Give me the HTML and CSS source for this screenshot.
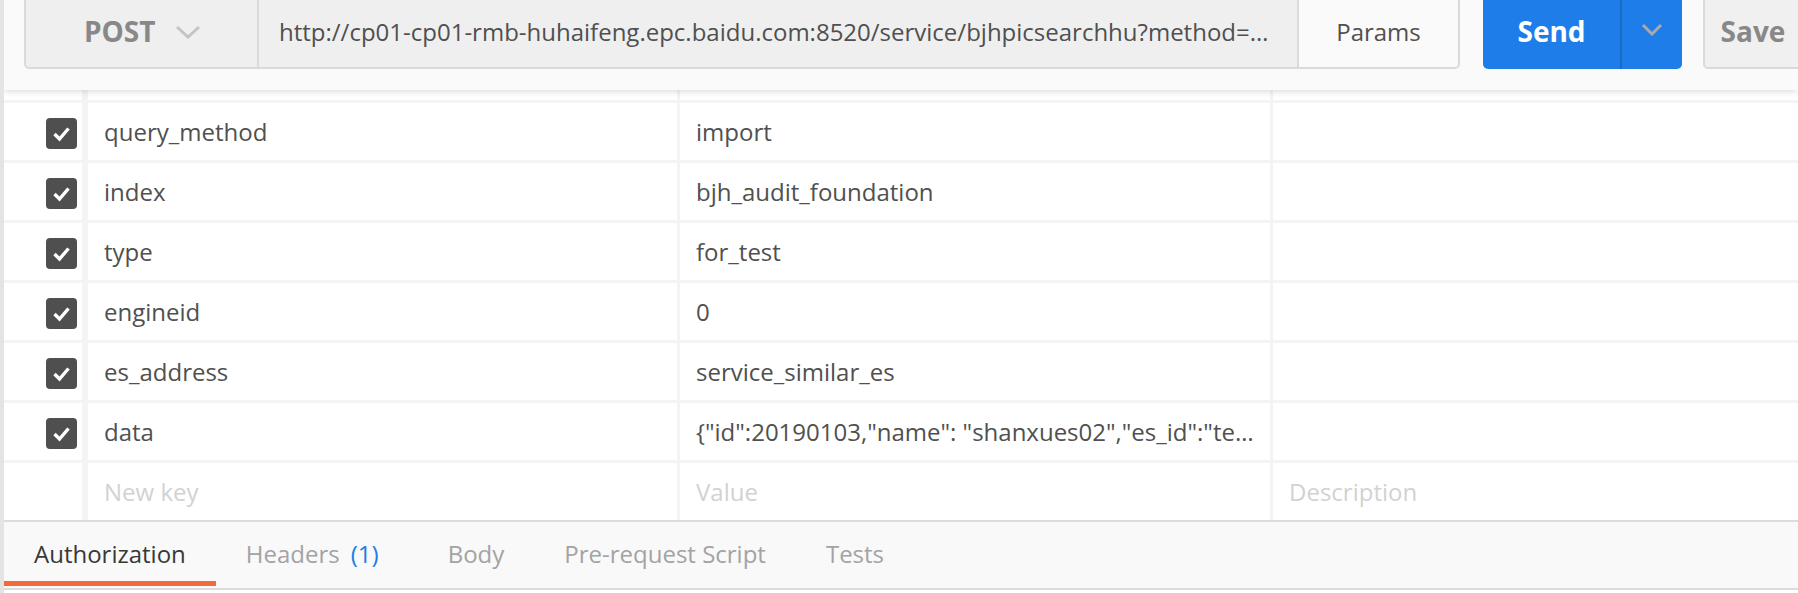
FILE: index.html
```html
<!DOCTYPE html>
<html lang="en">
<head>
<meta charset="utf-8">
<title>Postman request</title>
<link rel="stylesheet" href="styles.css">
</head>
<body>
<div class="app">
  <div class="edge-mark"></div>
  <header class="req-header">
    <div class="req-group">
      <div class="method">
        <span>POST</span>
        <svg class="chev" width="26" height="14" viewBox="0 0 26 14"><path d="M2 2 L13 12 L24 2" fill="none" stroke="#c4c4c4" stroke-width="3"/></svg>
      </div>
      <div class="url">http://cp01-cp01-rmb-huhaifeng.epc.baidu.com:8520/service/bjhpicsearchhu?method=…</div>
      <div class="params">Params</div>
    </div>
    <div class="send-group">
      <div class="send">Send</div>
      <div class="send-drop">
        <svg width="22" height="13" viewBox="0 0 22 13"><path d="M2 2 L11 11 L20 2" fill="none" stroke="#a9a9a9" stroke-width="3"/></svg>
      </div>
    </div>
    <div class="save">Save</div>
  </header>

  <div class="params-table">
    <div class="cell check"></div><div class="cell"></div><div class="cell"></div><div class="cell"></div>

    <div class="cell check"><span class="box"><svg width="31" height="31" viewBox="0 0 31 31"><path d="M8.5 16 L13.5 21 L22.5 10.5" fill="none" stroke="#fff" stroke-width="3.4"/></svg></span></div>
    <div class="cell">query_method</div><div class="cell">import</div><div class="cell"></div>

    <div class="cell check"><span class="box"><svg width="31" height="31" viewBox="0 0 31 31"><path d="M8.5 16 L13.5 21 L22.5 10.5" fill="none" stroke="#fff" stroke-width="3.4"/></svg></span></div>
    <div class="cell">index</div><div class="cell">bjh_audit_foundation</div><div class="cell"></div>

    <div class="cell check"><span class="box"><svg width="31" height="31" viewBox="0 0 31 31"><path d="M8.5 16 L13.5 21 L22.5 10.5" fill="none" stroke="#fff" stroke-width="3.4"/></svg></span></div>
    <div class="cell">type</div><div class="cell">for_test</div><div class="cell"></div>

    <div class="cell check"><span class="box"><svg width="31" height="31" viewBox="0 0 31 31"><path d="M8.5 16 L13.5 21 L22.5 10.5" fill="none" stroke="#fff" stroke-width="3.4"/></svg></span></div>
    <div class="cell">engineid</div><div class="cell">0</div><div class="cell"></div>

    <div class="cell check"><span class="box"><svg width="31" height="31" viewBox="0 0 31 31"><path d="M8.5 16 L13.5 21 L22.5 10.5" fill="none" stroke="#fff" stroke-width="3.4"/></svg></span></div>
    <div class="cell">es_address</div><div class="cell">service_similar_es</div><div class="cell"></div>

    <div class="cell check"><span class="box"><svg width="31" height="31" viewBox="0 0 31 31"><path d="M8.5 16 L13.5 21 L22.5 10.5" fill="none" stroke="#fff" stroke-width="3.4"/></svg></span></div>
    <div class="cell">data</div><div class="cell">{"id":20190103,"name": "shanxues02","es_id":"te…</div><div class="cell"></div>

    <div class="cell check"></div>
    <div class="cell placeholder">New key</div><div class="cell placeholder">Value</div><div class="cell placeholder">Description</div>
  </div>

  <nav class="tabs">
    <div class="tab active">Authorization</div>
    <div class="tab">Headers<span class="count">(1)</span></div>
    <div class="tab">Body</div>
    <div class="tab">Pre-request Script</div>
    <div class="tab">Tests</div>
  </nav>
</div>
</body>
</html>
```

FILE: styles.css
```css
* { box-sizing: border-box; }

html, body {
  margin: 0;
  padding: 0;
  overflow: hidden;
}

body {
  font-family: "Open Sans", "Liberation Sans", sans-serif;
  background: #ffffff;
}

.app {
  width: 1798px;
  height: 593px;
  border-left: 4px solid #e4e4e4;
  display: flex;
  flex-direction: column;
  position: relative;
  overflow: hidden;
}

.edge-mark {
  position: absolute;
  left: -4px;
  top: 20px;
  width: 3px;
  height: 6px;
  background: #f26b3a;
}

/* request bar */
.req-header {
  height: 90px;
  flex-shrink: 0;
  background: #fafafa;
  display: flex;
  align-items: flex-start;
  padding-left: 20px;
  position: relative;
  z-index: 1;
  box-shadow: 0 2px 6px rgba(0, 0, 0, 0.13);
}

.req-header > * { flex-shrink: 0; }

.req-group {
  display: flex;
  width: 1436px;
  height: 76px;
  margin-top: -7px;
  border: 2px solid #dadada;
  border-radius: 5px;
  overflow: hidden;
  background: #efefef;
}

.method {
  width: 233px;
  flex-shrink: 0;
  display: flex;
  align-items: center;
  padding-left: 58px;
  gap: 19px;
  border-right: 2px solid #dadada;
  font-size: 28px;
  font-weight: 700;
  color: #888888;
}

.chev { margin-top: 2px; }

.url {
  flex: 1;
  min-width: 0;
  display: flex;
  align-items: center;
  padding-left: 20px;
  padding-right: 10px;
  font-size: 24px;
  color: #505050;
  white-space: nowrap;
  overflow: hidden;
  border-right: 2px solid #dadada;
}

.params {
  width: 159px;
  flex-shrink: 0;
  display: flex;
  align-items: center;
  justify-content: center;
  background: #fafafa;
  font-size: 24px;
  color: #505050;
}

.send-group {
  display: flex;
  width: 199px;
  height: 76px;
  margin-top: -7px;
  margin-left: 23px;
  background: #1e7de8;
  border-radius: 0 0 5px 5px;
  overflow: hidden;
}

.send {
  width: 137px;
  display: flex;
  align-items: center;
  justify-content: center;
  color: #ffffff;
  font-size: 28px;
  font-weight: 700;
}

.send-drop {
  flex: 1;
  display: flex;
  align-items: center;
  justify-content: center;
  border-left: 2px solid #1a6bc6;
  padding-bottom: 4px;
}

.save {
  width: 100px;
  height: 76px;
  margin-top: -7px;
  margin-left: 21px;
  border: 2px solid #dadada;
  border-radius: 5px;
  background: #f0f0f0;
  display: flex;
  align-items: center;
  justify-content: center;
  font-size: 28px;
  font-weight: 700;
  color: #888888;
}

/* params table */
.params-table {
  height: 430px;
  flex-shrink: 0;
  display: grid;
  grid-template-columns: 81px 589px 590px 1fr;
  grid-template-rows: 10px repeat(7, 57px);
  column-gap: 3px;
  row-gap: 3px;
  background: #f4f4f4;
}

.cell {
  background: #ffffff;
  display: flex;
  align-items: center;
  padding-left: 16px;
  font-size: 24px;
  color: #505050;
  white-space: nowrap;
  overflow: hidden;
}

.cell.check {
  margin-right: 3px;
  padding-left: 42px;
  padding-top: 3px;
}

.box {
  width: 31px;
  height: 31px;
  border-radius: 4px;
  background: #4f4f4f;
  display: flex;
}

.cell.placeholder { color: #d2d2d2; }

/* tabs */
.tabs {
  height: 70px;
  flex-shrink: 0;
  display: flex;
  align-items: flex-start;
  background: #f9f9f9;
  border-top: 2px solid #dcdcdc;
  border-bottom: 2px solid #dcdcdc;
}

.tab {
  height: 64px;
  padding: 3px 30px 0;
  display: flex;
  align-items: center;
  border-bottom: 5px solid transparent;
  font-size: 24px;
  color: #a3a3a3;
  white-space: nowrap;
}

.tab.active {
  color: #383838;
  border-bottom-color: #f26b3a;
}

.count {
  color: #1e7de8;
  margin-left: 11px;
  padding-right: 9px;
}
```
